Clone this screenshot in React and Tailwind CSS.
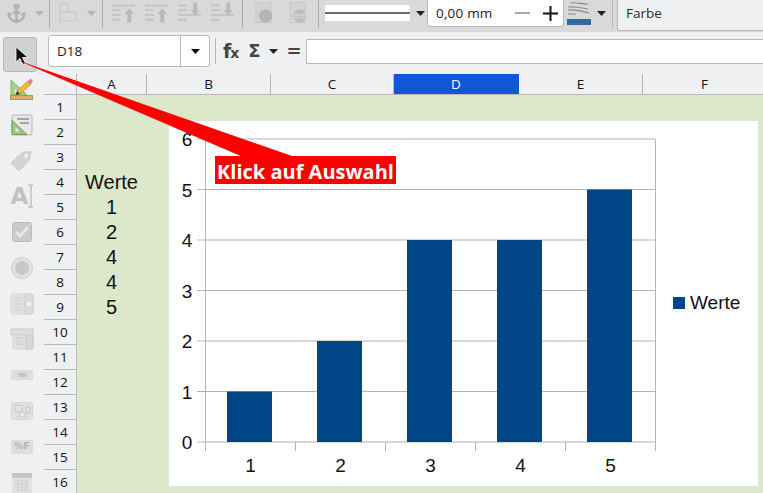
import { Anchor } from "lucide-react";

const columns = [
  { name: "A", width: "w-[70px]" },
  { name: "B", width: "w-[124px]" },
  { name: "C", width: "w-[123px]" },
  { name: "D", width: "w-[125px]", selected: true },
  { name: "E", width: "w-[124px]" },
  { name: "F", width: "w-[124px]" },
];

const cells = { 4: "Werte", 5: "1", 6: "2", 7: "4", 8: "4", 9: "5" };
const rows = Array.from({ length: 16 }, (_, i) => i + 1);
const values = [1, 2, 4, 4, 5];

function Caret({ className = "" }) {
  return (
    <svg width="9" height="5" viewBox="0 0 9 5" className={className}>
      <path d="M0 0h9L4.500 5z" fill="currentColor" />
    </svg>
  );
}

function Sep({ className = "" }) {
  return <div className={"w-px h-[29px] bg-[#a9a9a9] mt-[1px] " + className} />;
}

function AlignIcon({ flip, className = "" }) {
  return (
    <svg width="23" height="22" viewBox="0 0 24 22" className={"text-[#c2c2c2] " + className}>
      {flip ? (
        <>
          <path d="M0 2h9v2H0zM0 7h9v2H0zM0 12h24v2H0zM0 17h9v2H0z" fill="currentColor" />
          <path d="M13 8h3V0h4v8h3l-5 5z" fill="#b8b8b8" />
        </>
      ) : (
        <>
          <path d="M0 2h24v2H0zM0 7h9v2H0zM0 12h9v2H0zM0 17h9v2H0z" fill="currentColor" />
          <path d="M13 12h3v9h4v-9h3l-5-6z" fill="#b8b8b8" />
        </>
      )}
    </svg>
  );
}

function ShadowIcon({ striped }) {
  return (
    <svg width="19" height="24" viewBox="0 0 20 24" className="text-[#c6c6c6]">
      <rect x="1" y="1" width="16" height="21" fill="#d3d3d3" stroke="currentColor" />
      <circle cx="11" cy="15" r="7" fill={striped ? "#bdbdbd" : "#b5b5b5"} />
      {striped && <path d="M5 13h12M5 15h13M5 17h12" stroke="#d9d9d9" />}
    </svg>
  );
}

function TopToolbar() {
  return (
    <div className="h-[32px] bg-[#d9d9d9] flex items-center pb-[6px] shrink-0">
      <Anchor className="ml-[6px] w-[21px] h-[21px] text-[#b3b3b3]" strokeWidth={3} />
      <Caret className="ml-[8px] text-[#b5b5b5]" />
      <Sep className="ml-[5px]" />
      <svg width="19" height="22" viewBox="0 0 20 22" className="ml-[9px] text-[#cbcbcb]">
        <path d="M1 0v22M1 1h8v8H1M1 10h17v9H1" stroke="currentColor" strokeWidth="1.500" fill="none" />
      </svg>
      <Caret className="ml-[9px] text-[#b5b5b5]" />
      <Sep className="ml-[6px]" />
      <AlignIcon className="ml-[9px]" />
      <AlignIcon className="ml-[10px]" />
      <AlignIcon flip className="ml-[10px]" />
      <AlignIcon flip className="ml-[10px]" />
      <Sep className="ml-[8px]" />
      <div className="ml-[12px]"><ShadowIcon /></div>
      <div className="ml-[15px]"><ShadowIcon striped /></div>
      <Sep className="ml-[10px]" />
      <div className="ml-[6px] w-[85px] h-[16px] bg-white flex items-center">
        <div className="w-full h-[2px] bg-[#6e6e6e]" />
      </div>
      <Caret className="ml-[6px] text-[#222222]" />
      <div className="ml-[2px] self-start w-[137px] h-[27px] bg-white border-x border-b border-[#b8b8b8] rounded-b-[3px] flex items-center pl-[8px] text-[#222222] text-[13.500px] tracking-[0.2px]">
        <span>0,00 mm</span>
        <span className="ml-[22px] w-[15px] h-[2px] bg-[#a9a9a9]" />
        <svg width="15" height="15" viewBox="0 0 15 15" className="ml-[13px]">
          <path d="M7.500 0v15M0 7.500h15" stroke="#111111" strokeWidth="2" />
        </svg>
      </div>
      <svg width="24" height="24" viewBox="0 0 24 24" className="ml-[3px]">
        <path d="M3 2c6-1 12 1 18 1M1 6c7-1 14 1 20 2M1 9c7-1 14 1 21 3M1 13h8" stroke="#8a8a8a" strokeWidth="1.200" fill="none" />
        <rect x="0" y="18" width="24" height="6" fill="#3465a4" />
      </svg>
      <Caret className="ml-[6px] text-[#222222]" />
      <div className="ml-[6px] w-px h-[30px] bg-[#b5b5b5]" />
      <div className="ml-[4px] self-start h-[31px] flex-1 bg-[#eff0f1] border-l border-b border-[#b8b8b8] rounded-bl-[3px] flex items-center pl-[8px] pb-[3px] text-[13.500px] text-[#2a2a2a]">
        Farbe
      </div>
    </div>
  );
}

function FormulaBar() {
  return (
    <div className="h-[42px] bg-[#eff0f1] flex items-start shrink-0">
      <div className="ml-[3px] mt-[5px] w-[34px] h-[35px] bg-[#d0d1d3] border border-[#b4b5b7] rounded-[3px] flex items-start justify-center pt-[8px] pl-[3px]">
        <svg width="14" height="19" viewBox="0 0 14 19">
          <path d="M1 1v15l4-3.500 3 6 2.500-1.200-3-5.800h5.500z" fill="#111111" stroke="#ffffff" strokeWidth="0.800" />
        </svg>
      </div>
      <div className="ml-[11px] mt-[3px] w-[162px] h-[32px] bg-white border border-[#b8b8b8] rounded-[3px] flex items-center text-[13.500px] text-[#222222]">
        <span className="flex-1 pl-[8px]">D18</span>
        <div className="w-[29px] h-full border-l border-[#b8b8b8] flex items-center justify-center">
          <Caret className="text-[#111111]" />
        </div>
      </div>
      <div className="ml-[5px] mt-[6px] w-px h-[26px] bg-[#b8b8b8]" />
      <span className="ml-[7px] mt-[7px] text-[19px] leading-[24px] font-bold text-[#444444] font-['DejaVu_Sans',sans-serif] tracking-[-1px]">
        f<span className="text-[14px]">x</span>
      </span>
      <span className="ml-[10px] mt-[7px] text-[18px] leading-[24px] font-bold text-[#444444] font-['DejaVu_Sans',sans-serif]">Σ</span>
      <Caret className="ml-[8px] mt-[17px] text-[#222222]" />
      <span className="ml-[9px] mt-[7px] text-[18px] leading-[24px] font-bold text-[#444444] font-['DejaVu_Sans',sans-serif]">=</span>
      <div className="ml-[4px] mt-[7px] flex-1 h-[25px] bg-white border-y border-l border-[#b8b8b8]" />
    </div>
  );
}

const stripIcons = [
  <svg key="1" width="24" height="24" viewBox="0 0 24 24">
    <path d="M1 3v15h16z" fill="#a9d18e" stroke="#84b368" />
    <path d="M5 12v4h4z" fill="#eff0f1" />
    <rect x="0.500" y="18.500" width="22" height="4" fill="#e0a96d" stroke="#c08a50" />
    <path d="M7 14 18 4l3 3L10 17z" fill="#f6b73c" stroke="#b98a20" strokeWidth="0.800" />
    <path d="M18 4l2.500-2.500 2.500 2.500L21 7z" fill="#e878a4" />
    <path d="M7 14l-1.500 4 4.500-1z" fill="#333333" />
  </svg>,
  <svg key="2" width="22" height="22" viewBox="0 0 22 22">
    <rect x="1" y="1" width="20" height="20" rx="1.500" fill="#e8e8e8" stroke="#b5b5b5" />
    <path d="M6 5h12M9 9h9" stroke="#a5a5a5" strokeWidth="2" />
    <path d="M1 6.500v14h15z" fill="#9cc77e" stroke="#6f9f52" />
    <path d="M4.500 13v4.500h4.500z" fill="#e8e8e8" />
  </svg>,
  <svg key="3" width="24" height="24" viewBox="0 0 24 24">
    <path d="M1 15 13 4h7v7L9 23z" fill="#d4d4d4" stroke="#c9c9c9" />
    <circle cx="16" cy="8" r="2" fill="#f0f0f0" />
    <path d="M17 6c2-4 6-3 4 0" stroke="#c9c9c9" fill="none" />
  </svg>,
  <div key="4" className="flex items-end font-bold text-[23px] leading-[24px] text-[#c2c2c2] font-['DejaVu_Sans',sans-serif]">
    A<span className="w-[5px] h-[24px] border-y-2 border-[#cdcdcd] relative flex justify-center"><span className="w-[2px] h-full bg-[#cdcdcd]" /></span>
  </div>,
  <svg key="5" width="20" height="20" viewBox="0 0 20 20">
    <rect x="0.500" y="0.500" width="19" height="19" rx="2" fill="#cbcbcb" stroke="#bdbdbd" />
    <path d="M4 10l4 4 8-9" stroke="#e8e8e8" strokeWidth="3" fill="none" />
  </svg>,
  <svg key="6" width="22" height="22" viewBox="0 0 22 22">
    <circle cx="11" cy="11" r="10.500" fill="#e2e2e2" stroke="#cfcfcf" />
    <circle cx="11" cy="11" r="7" fill="#c8c8c8" />
  </svg>,
  <svg key="7" width="24" height="22" viewBox="0 0 24 22">
    <rect x="1" y="1" width="22" height="20" rx="1.500" fill="#e2e2e2" stroke="#d6d6d6" />
    <path d="M4 5h9M4 8h6M4 11h9M4 14h6M4 17h9" stroke="#cdcdcd" />
    <rect x="15" y="1" width="8" height="20" rx="2" fill="#dcdcdc" stroke="#cdcdcd" />
    <rect x="16" y="8" width="6" height="6" fill="#f0f0f0" stroke="#cdcdcd" />
  </svg>,
  <svg key="8" width="24" height="22" viewBox="0 0 24 22">
    <rect x="1" y="1" width="22" height="6" fill="#dddddd" stroke="#cccccc" />
    <rect x="3" y="7" width="20" height="14" rx="1.500" fill="#e0e0e0" stroke="#d2d2d2" />
    <path d="M6 10h8M6 13h6M6 16h8" stroke="#c8c8c8" />
    <rect x="16" y="7" width="7" height="14" rx="2" fill="#d8d8d8" stroke="#c8c8c8" />
  </svg>,
  <svg key="9" width="22" height="10" viewBox="0 0 22 10">
    <rect width="22" height="10" rx="1" fill="#dddddd" />
    <rect x="7" y="3" width="8" height="4" fill="#c4c4c4" />
  </svg>,
  <svg key="10" width="22" height="18" viewBox="0 0 22 18">
    <rect x="0.500" y="0.500" width="21" height="17" rx="2" fill="#e2e2e2" stroke="#d6d6d6" />
    <rect x="4" y="3" width="7" height="7" fill="none" stroke="#c8c8c8" />
    <path d="M7 15l4-7 4 7z" fill="#e8e8e8" stroke="#c8c8c8" />
    <rect x="15" y="5" width="4" height="6" fill="none" stroke="#c8c8c8" />
  </svg>,
  <div key="11" className="w-[22px] h-[14px] rounded-[1px] bg-[#dddddd] flex items-center justify-center text-[9px] font-bold text-[#b2b2b2] font-['DejaVu_Sans',sans-serif]">%F</div>,
  <svg key="12" width="20" height="20" viewBox="0 0 20 20">
    <rect width="20" height="20" fill="#e2e2e2" />
    <rect width="20" height="5" fill="#c4c4c4" />
    <path d="M3 8h14M3 11h14M3 14h14M3 17h14M6 6v13M10 6v13M14 6v13" stroke="#cfcfcf" />
  </svg>,
];

function Chart() {
  const gridY = [139, 189.5, 240, 290.5, 341, 391.5, 442];
  // coordinates below are in page pixels, the box starts at 169,121
  return (
    <div className="absolute left-[125px] top-[47px] w-[589px] h-[365px] bg-white">
      <svg width="589" height="365" viewBox="169 121 589 365" className="font-['Liberation_Sans',sans-serif]">
        {gridY.map((y, i) => (
          <g key={y}>
            <path d={`M197 ${y}H655`} stroke="#b3b3b3" strokeWidth="1.200" />
            <text x="187" y={y + 7} textAnchor="middle" fontSize="19" fill="#111111">{6 - i}</text>
          </g>
        ))}
        <path d="M205.500 139V451M655.500 139V451" stroke="#b3b3b3" />
        {[295, 385, 475, 565].map((x) => (
          <path key={x} d={`M${x + 0.5} 442V451`} stroke="#b3b3b3" />
        ))}
        {values.map((v, i) => (
          <g key={i}>
            <rect x={227 + i * 90} y={442 - v * 50.5} width="45" height={v * 50.5} fill="#004586" />
            <text x={250.5 + i * 90} y="472" textAnchor="middle" fontSize="19" fill="#111111">{i + 1}</text>
          </g>
        ))}
        <rect x="673" y="297" width="12" height="12" fill="#004586" />
        <text x="690" y="309" fontSize="19" fill="#111111">Werte</text>
      </svg>
    </div>
  );
}

export default function App() {
  return (
    <div className="relative w-[763px] h-[493px] overflow-hidden flex flex-col bg-[#eff0f1] font-['Open_Sans',sans-serif]">
      <TopToolbar />
      <FormulaBar />
      <div className="flex flex-1 min-h-0">
        <div className="w-[44px] shrink-0 -mt-[3px] flex flex-col items-center">
          {stripIcons.map((icon, i) => (
            <div key={i} className="h-[35.800px] shrink-0 flex items-center justify-center">{icon}</div>
          ))}
        </div>
        <div className="flex-1 min-w-0 relative">
          <div className="flex h-[21px] border-b border-[#b8b8b8]">
            <div className="w-[33px] shrink-0 border-r border-[#b8b8b8]" />
            {columns.map((c) => (
              <div
                key={c.name}
                className={`${c.width} shrink-0 flex items-center justify-center text-[13.500px] border-r ${
                  c.selected ? "bg-[#0f56d9] text-white border-[#0f56d9]" : "text-[#111111] border-[#b8b8b8]"
                }`}
              >
                {c.name}
              </div>
            ))}
          </div>
          {rows.map((r) => (
            <div key={r} className="flex h-[25px]">
              <div className="w-[33px] shrink-0 border-r border-b border-[#b8b8b8] flex items-center justify-center text-[13.500px] text-[#111111]">
                {r}
              </div>
              <div className="flex-1 bg-[#dde8cb] font-['Liberation_Sans',sans-serif] text-[20px] leading-[25px] text-[#111111]">
                {cells[r] === "Werte" ? (
                  <span className="pl-[8px]">Werte</span>
                ) : (
                  <span className="block w-[69px] text-center">{cells[r]}</span>
                )}
              </div>
            </div>
          ))}
          <Chart />
        </div>
      </div>
      {/* callout over the sheet */}
      <svg width="763" height="493" viewBox="0 0 763 493" className="absolute left-0 top-0 pointer-events-none">
        <path d="M17 60 295 157H243z" fill="#ff0000" />
      </svg>
      <div className="absolute left-[215px] top-[156px] w-[181px] h-[28px] bg-[#ff0000] text-white font-bold text-[20px] leading-[32px] text-center whitespace-nowrap">
        Klick auf Auswahl
      </div>
    </div>
  );
}
